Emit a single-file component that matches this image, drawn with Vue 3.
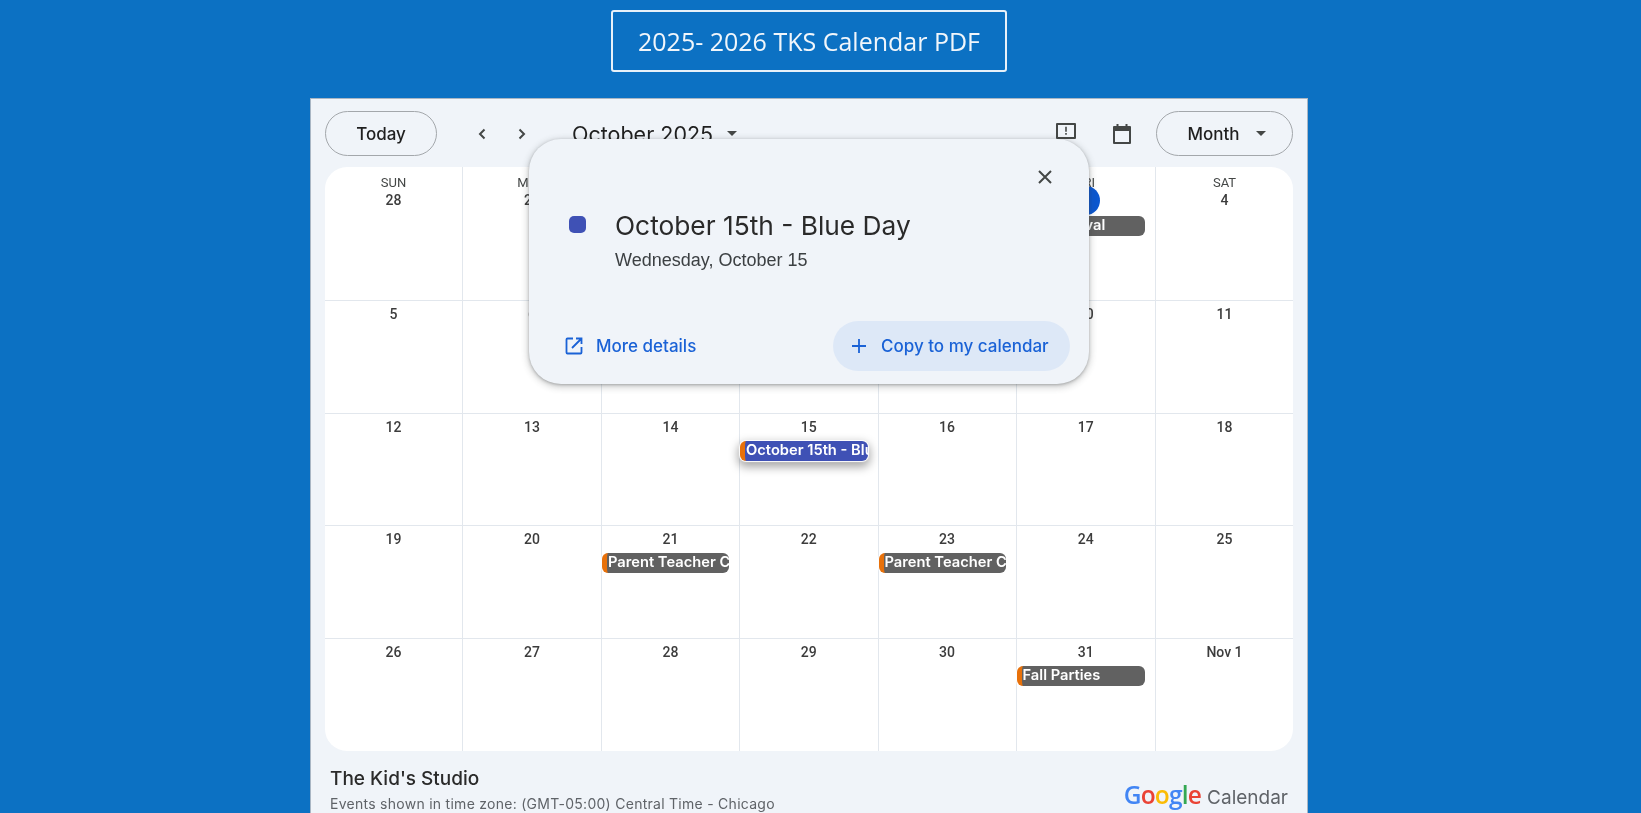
<script setup>
const dayNames = ['SUN', 'MON', 'TUE', 'WED', 'THU', 'FRI', 'SAT']

const cells = [
  '28', '29', '30', 'Oct 1', '2', '3', '4',
  '5', '6', '7', '8', '9', '10', '11',
  '12', '13', '14', '15', '16', '17', '18',
  '19', '20', '21', '22', '23', '24', '25',
  '26', '27', '28', '29', '30', '31', 'Nov 1',
]

const events = {
  5: { title: 'Fall Festival' },
  17: { title: 'October 15th - Blue Day', blue: true },
  23: { title: 'Parent Teacher Conferences' },
  25: { title: 'Parent Teacher Conferences' },
  33: { title: 'Fall Parties' },
}

const logo = [
  ['G', '#4285f4'],
  ['o', '#ea4335'],
  ['o', '#fbbc05'],
  ['g', '#4285f4'],
  ['l', '#34a853'],
  ['e', '#ea4335'],
]
</script>

<template>
  <div class="page">
    <div class="top">
      <a class="pdf-btn">2025- 2026 TKS Calendar PDF</a>
    </div>

    <div class="panel">
      <div class="toolbar">
        <button class="pill today">Today</button>
        <div class="arrows">
          <svg width="24" height="24" viewBox="0 0 24 24"><path d="M14.500 7.500 10 12l4.500 4.500" fill="none" stroke="#444746" stroke-width="2"/></svg>
          <svg width="24" height="24" viewBox="0 0 24 24"><path d="M9.500 7.500 14 12l-4.500 4.500" fill="none" stroke="#444746" stroke-width="2"/></svg>
        </div>
        <div class="month-title">
          October 2025
          <span class="caret"></span>
        </div>
        <div class="spacer"></div>
        <svg class="tool-icon feedback" width="24" height="24" viewBox="0 0 24 24">
          <path d="M3 4h18v14H3z" fill="none" stroke="#444746" stroke-width="2" stroke-linejoin="round"/>
          <path d="M11.200 6.800h1.600v5h-1.600zM11.200 13h1.600v1.800h-1.600z" fill="#444746"/>
        </svg>
        <svg class="tool-icon cal" width="24" height="24" viewBox="0 0 24 24">
          <path d="M4 5h16v16H4z" fill="none" stroke="#444746" stroke-width="2" stroke-linejoin="round"/>
          <path d="M4 4h16v5H4zM6.500 2h2v3h-2zM15.500 2h2v3h-2z" fill="#444746"/>
        </svg>
        <button class="pill month">
          Month
          <span class="caret small"></span>
        </button>
      </div>

      <div class="grid">
        <div v-for="(label, i) in cells" :key="i" class="cell">
          <div v-if="i < 7" class="day-name">{{ dayNames[i] }}</div>
          <div class="date" :class="{ current: label === '3' }">{{ label }}</div>
          <div v-if="events[i]" class="chip" :class="{ blue: events[i].blue }">
            <span class="chip-text">{{ events[i].title }}</span>
          </div>
        </div>
      </div>

      <div class="footer">
        <div>
          <div class="org">The Kid's Studio</div>
          <div class="zone">Events shown in time zone: (GMT-05:00) Central Time - Chicago</div>
        </div>
        <div class="logo">
          <span class="google"><span v-for="(l, i) in logo" :key="i" :style="{ color: l[1] }">{{ l[0] }}</span></span>
          <span class="logo-cal">Calendar</span>
        </div>
      </div>

      <div class="popup">
        <div class="popup-close">
          <svg width="24" height="24" viewBox="0 0 24 24"><path d="M6 6l12 12M18 6 6 18" stroke="#444746" stroke-width="2" fill="none"/></svg>
        </div>
        <div class="popup-head">
          <span class="swatch"></span>
          <div>
            <div class="popup-title">October 15th - Blue Day</div>
            <div class="popup-date">Wednesday, October 15</div>
          </div>
        </div>
        <div class="popup-actions">
          <a class="action">
            <svg width="20" height="20" viewBox="0 0 20 20">
              <path d="M9 2.500H3.500a1 1 0 0 0-1 1v13a1 1 0 0 0 1 1h13a1 1 0 0 0 1-1V11" fill="none" stroke="#1a62d6" stroke-width="1.800"/>
              <path d="M12 2.500h5.500V8M17.500 2.500 8 12" fill="none" stroke="#1a62d6" stroke-width="1.800"/>
            </svg>
            More details
          </a>
          <a class="action copy">
            <svg width="20" height="20" viewBox="0 0 20 20"><path d="M10 3v14M3 10h14" stroke="#1a62d6" stroke-width="1.800" fill="none"/></svg>
            Copy to my calendar
          </a>
        </div>
      </div>
    </div>
  </div>
</template>

<style>
html, body { margin: 0; overflow: hidden; }
</style>

<style scoped>
.page {
  height: 813px;
  overflow: hidden;
  background: #0c71c3;
  font-family: Inter, "Liberation Sans", sans-serif;
  filter: blur(0.4px);
}
.top { display: flex; justify-content: center; width: 998px; margin-left: 310px; padding-top: 10px; height: 98px; box-sizing: border-box; }
.pdf-btn {
  height: 62px;
  box-sizing: border-box;
  padding: 0 25px;
  display: flex;
  align-items: center;
  border: 2px solid #e8f1f9;
  border-radius: 3px;
  color: #f1f6fb;
  font: 25px "Open Sans", sans-serif;
}
.panel {
  position: relative;
  width: 998px;
  height: 740px;
  margin-left: 310px;
  box-sizing: border-box;
  padding: 0 14px;
  background: #f0f4f9;
  border: 1px solid #a9b6c4;
  border-bottom: none;
}
.toolbar { display: flex; align-items: center; height: 68px; padding-top: 1px; box-sizing: border-box; }
.pill {
  height: 45px;
  box-sizing: border-box;
  border: 1.500px solid #a3a7ab;
  border-radius: 23px;
  background: transparent;
  color: #1f1f1f;
  font: 500 17px Inter, sans-serif;
  padding: 0;
}
.today { width: 112px; }
.arrows { display: flex; gap: 16px; margin-left: 33px; }
.month-title { margin-left: 38px; font-size: 21.500px; color: #1f1f1f; display: flex; align-items: center; gap: 14px; }
.caret { width: 0; height: 0; border: 5px solid transparent; border-top-color: #444746; border-bottom: none; }
.spacer { flex: 1; }
.tool-icon { flex: none; }
.feedback { margin-right: 32px; margin-top: -3px; }
.cal { margin-right: 22px; }
.month { width: 137px; display: flex; align-items: center; justify-content: center; gap: 16px; padding-left: 4px; }
.grid {
  display: grid;
  grid-template-columns: 138px 139px 138px 138.500px 138px 139.500px 1fr;
  grid-template-rows: 134px 113px 112px 113px 112px;
  height: 584px;
  background: #fff;
  border-radius: 22px;
  overflow: hidden;
}
.cell {
  border-right: 1px solid #e2e7ed;
  border-bottom: 1px solid #e2e7ed;
  box-sizing: border-box;
  text-align: center;
  color: #1f1f1f;
  min-width: 0;
}
.cell:nth-child(7n) { border-right: none; }
.cell:nth-child(n+29) { border-bottom: none; }
.day-name { font: 13px/15px Roboto, sans-serif; color: #444746; margin-top: 8px; }
.date { font: 500 14px/18px Roboto, sans-serif; padding-top: 4px; color: #3c3c3c; }
.cell:nth-child(-n+7) .date { padding-top: 1px; }
.date.current {
  width: 28px;
  height: 28px;
  line-height: 28px;
  margin: -4px auto -3px;
  border-radius: 50%;
  background: #0b57d0;
  color: #fff;
}
.chip {
  height: 20px;
  margin: 5px 10px 0 0;
  border-left: 5px solid #e8710a;
  border-radius: 6px;
  background: #616161;
  box-shadow: 0 0 1px 1px #fff;
  overflow: hidden;
  text-align: left;
  white-space: nowrap;
  color: #fff;
  font: 600 14.700px/18px Inter, sans-serif;
}
.cell:nth-child(-n+7) .chip { margin-top: 4px; }
.chip-text { display: block; padding-left: 1px; }
.chip.blue { background: #3f51b5; box-shadow: 0 0 1px 1px #fff, 0 4px 10px 2px rgba(0, 0, 0, .35); }
.footer { display: flex; justify-content: space-between; padding: 16px 5px 0; }
.org { font-size: 19px; font-weight: 500; color: #2a2a2a; line-height: 24px; }
.zone { font-size: 14px; color: #5f6368; line-height: 20px; margin-top: 3px; letter-spacing: .27px; }
.logo { display: flex; align-items: baseline; gap: 6px; padding-top: 11px; }
.google { font: 600 24.500px "Open Sans", sans-serif; letter-spacing: -.8px; }
.logo-cal { font: 19px Inter, sans-serif; color: #5f6368; }
.popup {
  position: absolute;
  left: 218px;
  top: 40px;
  width: 560px;
  height: 245px;
  box-sizing: border-box;
  background: #f0f4f9;
  border-radius: 32px;
  box-shadow: 0 2px 6px 2px rgba(60, 64, 67, .2), 0 1px 3px rgba(60, 64, 67, .35);
  display: flex;
  flex-direction: column;
}
.popup-close { display: flex; justify-content: flex-end; padding: 26px 32px 0 0; height: 50px; box-sizing: border-box; }
.popup-head { display: flex; align-items: flex-start; padding: 19px 0 0 40px; gap: 29px; flex: 1; }
.swatch { width: 17px; height: 17px; border-radius: 5px; background: #3f51b5; margin-top: 8px; flex: none; }
.popup-title { font-size: 26.300px; color: #2a2a2a; line-height: 36px; }
.popup-date { font: 18px/24px "Liberation Sans", sans-serif; color: #3c4043; margin-top: 4px; }
.popup-actions { display: flex; justify-content: space-between; align-items: center; padding: 0 19px 13px 35px; }
.action { display: flex; align-items: center; gap: 12px; color: #1a62d6; font-size: 17px; font-weight: 500; }
.copy { height: 50px; width: 237px; box-sizing: border-box; padding-left: 16px; border-radius: 25px; background: #dde8f7; }
</style>
